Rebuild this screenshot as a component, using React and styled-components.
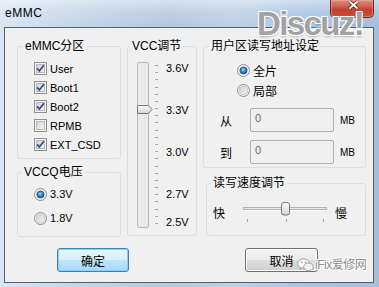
import React from 'react';
import styled, { createGlobalStyle } from 'styled-components';

const GlobalStyle = createGlobalStyle`
  html, body { margin: 0; padding: 0; background: #f0f0f0; }
  body {
    font-family: "Liberation Sans", "Noto Sans CJK SC", sans-serif;
    color: #000;
  }
`;

const Window = styled.div`
  position: relative;
  width: 379px;
  height: 287px;
  display: flex;
  flex-direction: column;
  overflow: hidden;
  background:
    linear-gradient(180deg, rgba(255,255,255,0.45) 0px, rgba(255,255,255,0.12) 12px, rgba(255,255,255,0) 27px),
    linear-gradient(90deg, #d9e5f2 0%, #c6d7ea 18%, #b5c8de 45%, #bed1e6 62%, #a9c4e2 80%, #a6bed9 100%);
`;

const TitleBar = styled.div`
  height: 27px;
  display: flex;
  align-items: flex-start;
  padding-left: 5px;
`;

const TitleText = styled.div`
  margin-top: 6px;
  font-size: 12px;
  line-height: 14px;
  letter-spacing: 0.5px;
`;

const CloseButton = styled.div`
  margin-left: auto;
  margin-right: 5px;
  width: 44px;
  height: 18px;
  box-sizing: border-box;
  border: 1px solid #6e2b22;
  border-top: none;
  border-radius: 0 0 5px 5px;
  background: linear-gradient(180deg, #dc8f80 0%, #cf6553 35%, #c4412f 55%, #c94c3a 100%);
  box-shadow: inset 0 0 0 1px rgba(255, 190, 170, 0.35);
`;

const Frame = styled.div`
  flex: 1;
  display: flex;
  padding: 0 5px 4px 4px;
`;

const Client = styled.div`
  flex: 1;
  border: 1px solid #52606f;
  background: #f0f0f0;
  padding: 11px 0 0 12px;
  display: flex;
  flex-direction: column;
`;

const MainRow = styled.div`
  display: flex;
  gap: 6px;
  align-items: flex-start;
`;

const Column = styled.div`
  display: flex;
  flex-direction: column;
  gap: ${p => p.$gap}px;
`;

const Group = styled.fieldset`
  margin: 0;
  padding: 0;
  min-width: 0;
  box-sizing: border-box;
  width: ${p => p.$w}px;
  height: ${p => p.$h}px;
  margin-left: ${p => p.$shift || 0}px;
  border: 1px solid #d5dfe5;
  border-radius: 3px;
`;

const Legend = styled.legend`
  margin-left: ${p => (p.$indent ?? 5)}px;
  padding: 0 2px;
  font-size: 12px;
  line-height: 14px;
`;

const OptionList = styled.div`
  display: flex;
  flex-direction: column;
  padding: ${p => p.$top}px 0 0 ${p => p.$left}px;
`;

const OptionRow = styled.div`
  display: flex;
  align-items: center;
  gap: 3px;
  height: ${p => p.$h}px;
  font-size: ${p => (p.$cjk ? 12 : 11)}px;
  svg { flex: none; }
`;

const VccBody = styled.div`
  display: flex;
  padding-left: 8px;
`;

const ScaleLabels = styled.div`
  position: relative;
  margin-left: 6px;
  height: 180px;
  width: 28px;
`;

const ScaleLabel = styled.span`
  position: absolute;
  left: 0;
  font-size: 11px;
  line-height: 14px;
`;

const AddressRows = styled.div`
  display: flex;
  flex-direction: column;
  gap: 8px;
  margin-top: 8px;
`;

const AddressRow = styled.div`
  display: flex;
  align-items: center;
  height: 24px;
  padding-left: 16px;
`;

const FieldLabel = styled.span`
  width: 30px;
  font-size: 12px;
`;

const TextBox = styled.div`
  width: 84px;
  height: 24px;
  box-sizing: border-box;
  border: 1px solid #b0b0b0;
  border-radius: 2px;
  background: #f0f0f0;
  padding: 3px 4px 0;
  font-size: 11px;
  line-height: 13px;
  color: #6d6d6d;
`;

const Unit = styled.span`
  margin-left: 6px;
  font-size: 10px;
`;

const SpeedRow = styled.div`
  display: flex;
  align-items: center;
  height: 24px;
  margin-top: 10px;
  padding-left: 6px;
  font-size: 12px;
  svg { margin: 0 6px 0 16px; }
`;

const ButtonRow = styled.div`
  display: flex;
  margin-top: 11px;
  padding-left: 40px;
`;

const Button = styled.div`
  width: ${p => p.$w}px;
  height: 24px;
  margin-left: ${p => p.$gap || 0}px;
  box-sizing: border-box;
  border-radius: 3px;
  display: flex;
  align-items: center;
  justify-content: center;
  font-size: 12px;
  border: 1px solid ${p => (p.$primary ? '#3c7fb1' : '#707070')};
  background: ${p => p.$primary
    ? 'linear-gradient(180deg, #e8f5fc 0%, #d9effb 48%, #bee6fd 52%, #a7d9f5 100%)'
    : 'linear-gradient(180deg, #f2f2f2 0%, #ebebeb 48%, #dddddd 52%, #cfcfcf 100%)'};
  box-shadow: inset 0 0 0 1px ${p => (p.$primary ? '#86d2f5' : '#fcfcfc')};
`;

const Watermark = styled.div`
  position: absolute;
  left: 257px;
  top: 10px;
  font-family: "Liberation Sans", sans-serif;
  font-weight: bold;
  font-size: 33px;
  line-height: 28px;
  letter-spacing: -1.6px;
  color: #a2a2a2;
  text-shadow: 1px 1px 0 #fff, -1px -1px 0 #fff, 1px -1px 0 #fff, -1px 1px 0 #fff,
    0 2px 2px rgba(0, 0, 0, 0.25);
  pointer-events: none;
`;

const Credit = styled.div`
  position: absolute;
  left: 297px;
  top: 258px;
  display: flex;
  align-items: center;
  gap: 1px;
  font-size: 12px;
  line-height: 14px;
  letter-spacing: -0.5px;
  color: #8e8e8e;
  text-shadow: 1px 1px 0 #fff, -1px -1px 0 #fff, 1px -1px 0 #fff, -1px 1px 0 #fff;
`;

function CheckBox({ checked }) {
  return (
    <svg width="13" height="13" viewBox="0 0 13 13">
      <defs>
        <linearGradient id="cbFill" x1="0" y1="0" x2="1" y2="1">
          <stop offset="0" stopColor="#cdd1d6" />
          <stop offset="1" stopColor="#f7f7f7" />
        </linearGradient>
      </defs>
      <rect x="0.5" y="0.5" width="12" height="12" fill="#f4f4f4" stroke="#8f8f8f" />
      <rect x="2.5" y="2.5" width="8" height="8" fill="url(#cbFill)" stroke="#b5b9bf" />
      {checked && (
        <path d="M3.2 6.4 L5.4 9 L9.9 3.3" fill="none" stroke="#34497b" strokeWidth="1.7" />
      )}
    </svg>
  );
}

function Radio({ checked }) {
  return (
    <svg width="13" height="13" viewBox="0 0 13 13">
      <defs>
        <linearGradient id="rdOff" x1="0" y1="0" x2="1" y2="1">
          <stop offset="0" stopColor="#c9cdd3" />
          <stop offset="1" stopColor="#f8f8f8" />
        </linearGradient>
        <radialGradient id="rdOn" cx="0.45" cy="0.4" r="0.6">
          <stop offset="0" stopColor="#b9e4fa" />
          <stop offset="0.45" stopColor="#3a90cf" />
          <stop offset="1" stopColor="#0f4c86" />
        </radialGradient>
      </defs>
      <circle cx="6.5" cy="6.5" r="6" fill="#f3f3f3" stroke="#8e8f8f" />
      <circle
        cx="6.5"
        cy="6.5"
        r={checked ? 3.6 : 4.2}
        fill={checked ? 'url(#rdOn)' : 'url(#rdOff)'}
        stroke={checked ? '#1c5588' : '#b9bdc3'}
        strokeWidth="0.8"
      />
    </svg>
  );
}

function CloseGlyph() {
  return (
    <svg width="42" height="17" viewBox="0 0 42 17">
      <path d="M18.5 1.5 L26.5 8.5 M26.5 1.5 L18.5 8.5" stroke="#4a201a" strokeWidth="3.6" />
      <path d="M18.5 1.5 L26.5 8.5 M26.5 1.5 L18.5 8.5" stroke="#ffffff" strokeWidth="1.8" />
    </svg>
  );
}

function VerticalTrack() {
  const ticks = Array.from({ length: 23 }, (_, i) => Math.round(12 + i * (158 / 22)));
  return (
    <svg width="24" height="180" viewBox="0 0 24 180">
      <defs>
        <linearGradient id="thumbV" x1="0" y1="0" x2="0" y2="1">
          <stop offset="0" stopColor="#fdfdfd" />
          <stop offset="1" stopColor="#d2d2d2" />
        </linearGradient>
      </defs>
      <rect x="1.5" y="9.5" width="11" height="165" rx="1.5" fill="#e8ebec" stroke="#b7babd" />
      {ticks.map(y => (
        <rect key={y} x="19" y={y} width="3" height="1" fill="#a8a8a8" />
      ))}
      <path d="M1.5 52.5 H12.5 L16 56.5 L12.5 60.5 H1.5 Z" fill="url(#thumbV)" stroke="#777" strokeLinejoin="round" />
    </svg>
  );
}

function HorizontalTrack() {
  return (
    <svg width="88" height="24" viewBox="0 0 88 24">
      <defs>
        <linearGradient id="thumbH" x1="0" y1="0" x2="0" y2="1">
          <stop offset="0" stopColor="#fdfdfd" />
          <stop offset="1" stopColor="#d2d2d2" />
        </linearGradient>
      </defs>
      <rect x="2.5" y="7.5" width="83" height="2" fill="#e8ebec" stroke="#b0b0b0" />
      <line x1="3" y1="10.5" x2="86" y2="10.5" stroke="#ffffff" />
      {[6, 45, 82].map(x => (
        <rect key={x} x={x} y="19" width="1" height="3" fill="#a8a8a8" />
      ))}
      <rect x="40.5" y="2.5" width="8" height="12.5" rx="2.5" fill="url(#thumbH)" stroke="#777" />
    </svg>
  );
}

function WeChatIcon() {
  return (
    <svg width="17" height="14" viewBox="0 0 17 14">
      <ellipse cx="6.5" cy="5.5" rx="5.8" ry="4.6" fill="#fafafa" stroke="#a0a0a0" />
      <path d="M3.5 9.2 L2.8 11.5 L5.6 9.9" fill="#fafafa" stroke="#a0a0a0" />
      <ellipse cx="11.5" cy="8.8" rx="4.8" ry="3.8" fill="#fafafa" stroke="#a0a0a0" />
      <circle cx="4.5" cy="4.3" r="0.8" fill="#9a9a9a" />
      <circle cx="8.3" cy="4.3" r="0.8" fill="#9a9a9a" />
      <circle cx="10" cy="8" r="0.6" fill="#9a9a9a" />
      <circle cx="13" cy="8" r="0.6" fill="#9a9a9a" />
    </svg>
  );
}

const partitions = [
  { name: 'User', on: true },
  { name: 'Boot1', on: true },
  { name: 'Boot2', on: true },
  { name: 'RPMB', on: false },
  { name: 'EXT_CSD', on: true },
];

const vccLabels = [3.6, 3.3, 3.0, 2.7, 2.5];

export default function App() {
  return (
    <>
      <GlobalStyle />
      <Window>
        <TitleBar>
          <TitleText>eMMC</TitleText>
          <CloseButton>
            <CloseGlyph />
          </CloseButton>
        </TitleBar>
        <Frame>
          <Client>
            <MainRow>
              <Column $gap={6}>
                <Group $w={104} $h={120}>
                  <Legend>eMMC分区</Legend>
                  <OptionList $top={6} $left={16}>
                    {partitions.map(p => (
                      <OptionRow key={p.name} $h={19}>
                        <CheckBox checked={p.on} />
                        <span>{p.name}</span>
                      </OptionRow>
                    ))}
                  </OptionList>
                </Group>
                <Group $w={104} $h={72}>
                  <Legend $indent={4}>VCCQ电压</Legend>
                  <OptionList $top={3} $left={16}>
                    <OptionRow $h={24}>
                      <Radio checked />
                      <span>3.3V</span>
                    </OptionRow>
                    <OptionRow $h={24}>
                      <Radio />
                      <span>1.8V</span>
                    </OptionRow>
                  </OptionList>
                </Group>
              </Column>

              <Group $w={70} $h={197}>
                <Legend $indent={2}>VCC调节</Legend>
                <VccBody>
                  <VerticalTrack />
                  <ScaleLabels>
                    {vccLabels.map(v => (
                      <ScaleLabel key={v} style={{ top: Math.round(8 + (3.6 - v) * 140) }}>
                        {v.toFixed(1)}V
                      </ScaleLabel>
                    ))}
                  </ScaleLabels>
                </VccBody>
              </Group>

              <Column $gap={8}>
                <Group $w={163} $h={129}>
                  <Legend>用户区读写地址设定</Legend>
                  <OptionList $top={7} $left={33}>
                    <OptionRow $h={20} $cjk>
                      <Radio checked />
                      <span>全片</span>
                    </OptionRow>
                    <OptionRow $h={20} $cjk>
                      <Radio />
                      <span>局部</span>
                    </OptionRow>
                  </OptionList>
                  <AddressRows>
                    <AddressRow>
                      <FieldLabel>从</FieldLabel>
                      <TextBox>0</TextBox>
                      <Unit>MB</Unit>
                    </AddressRow>
                    <AddressRow>
                      <FieldLabel>到</FieldLabel>
                      <TextBox>0</TextBox>
                      <Unit>MB</Unit>
                    </AddressRow>
                  </AddressRows>
                </Group>
                <Group $w={160} $h={60} $shift={3}>
                  <Legend $indent={4}>读写速度调节</Legend>
                  <SpeedRow>
                    <span>快</span>
                    <HorizontalTrack />
                    <span>慢</span>
                  </SpeedRow>
                </Group>
              </Column>
            </MainRow>

            <ButtonRow>
              <Button $w={72} $primary>确定</Button>
              <Button $w={73} $gap={116}>取消</Button>
            </ButtonRow>
          </Client>
        </Frame>

        <Watermark>Discuz!</Watermark>
        <Credit>
          <WeChatIcon />
          <span>iFix爱修网</span>
        </Credit>
      </Window>
    </>
  );
}
